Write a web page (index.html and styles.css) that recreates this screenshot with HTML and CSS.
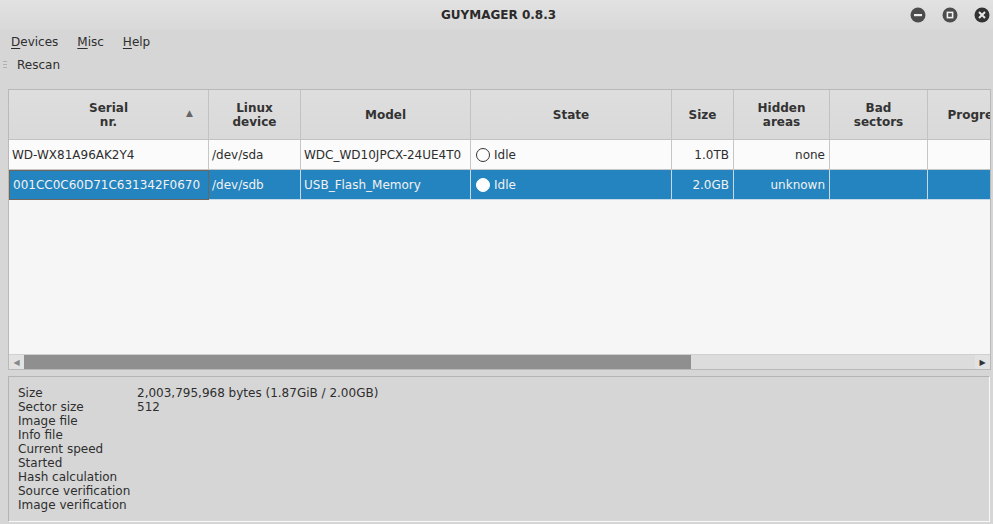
FILE: index.html
```html
<!DOCTYPE html>
<html>
<head>
<meta charset="utf-8">
<title>GUYMAGER 0.8.3</title>
<link rel="stylesheet" href="styles.css">
</head>
<body>
<div class="window">
  <div class="titlebar">
    <div class="title">GUYMAGER 0.8.3</div>
    <div class="wbtns">
      <span class="wbtn"><svg width="16" height="16" viewBox="0 0 16 16"><circle cx="8" cy="8" r="7.5" fill="#4d4d4d"/><rect x="4" y="7" width="8" height="2.2" fill="#f0f0f0"/></svg></span>
      <span class="wbtn"><svg width="16" height="16" viewBox="0 0 16 16"><circle cx="8" cy="8" r="7.5" fill="#4d4d4d"/><rect x="4.6" y="4.6" width="6.8" height="6.8" fill="#f0f0f0"/><rect x="6.2" y="6.2" width="3.6" height="3.6" fill="#4d4d4d"/></svg></span>
      <span class="wbtn"><svg width="16" height="16" viewBox="0 0 16 16"><circle cx="8" cy="8" r="7.5" fill="#333"/><path d="M5 5 L11 11 M11 5 L5 11" stroke="#e8e8e8" stroke-width="2"/></svg></span>
    </div>
  </div>
  <div class="menubar">
    <span class="menu"><u>D</u>evices</span>
    <span class="menu"><u>M</u>isc</span>
    <span class="menu"><u>H</u>elp</span>
  </div>
  <div class="toolbar">
    <span class="grip"></span>
    <span class="tool">Rescan</span>
  </div>
  <div class="tableframe">
    <div class="tableview">
      <div class="row header">
        <div class="cell hc sortcol">Serial<br>nr.<span class="sort">▲</span></div>
        <div class="cell hc">Linux<br>device</div>
        <div class="cell hc">Model</div>
        <div class="cell hc">State</div>
        <div class="cell hc">Size</div>
        <div class="cell hc">Hidden<br>areas</div>
        <div class="cell hc">Bad<br>sectors</div>
        <div class="cell hc">Progress</div>
      </div>
      <div class="row data">
        <div class="cell">WD-WX81A96AK2Y4</div>
        <div class="cell">/dev/sda</div>
        <div class="cell">WDC_WD10JPCX-24UE4T0</div>
        <div class="cell state"><span class="dot"></span>Idle</div>
        <div class="cell right">1.0TB</div>
        <div class="cell right">none</div>
        <div class="cell"></div>
        <div class="cell"></div>
      </div>
      <div class="row data selected">
        <div class="cell focus">001CC0C60D71C631342F0670</div>
        <div class="cell">/dev/sdb</div>
        <div class="cell">USB_Flash_Memory</div>
        <div class="cell state"><span class="dot filled"></span>Idle</div>
        <div class="cell right">2.0GB</div>
        <div class="cell right">unknown</div>
        <div class="cell"></div>
        <div class="cell"></div>
      </div>
      <div class="empty"></div>
      <div class="hscroll">
        <span class="sbtn left">◀</span>
        <span class="handle"></span>
        <span class="track"></span>
        <span class="sbtn rightbtn">▶</span>
      </div>
    </div>
  </div>
  <div class="info">
    <div class="irow"><span class="lab">Size</span><span>2,003,795,968 bytes (1.87GiB / 2.00GB)</span></div>
    <div class="irow"><span class="lab">Sector size</span><span>512</span></div>
    <div class="irow"><span class="lab">Image file</span><span></span></div>
    <div class="irow"><span class="lab">Info file</span><span></span></div>
    <div class="irow"><span class="lab">Current speed</span><span></span></div>
    <div class="irow"><span class="lab">Started</span><span></span></div>
    <div class="irow"><span class="lab">Hash calculation</span><span></span></div>
    <div class="irow"><span class="lab">Source verification</span><span></span></div>
    <div class="irow"><span class="lab">Image verification</span><span></span></div>
  </div>
</div>
</body>
</html>
```

FILE: styles.css
```css
* { box-sizing: border-box; }
html, body { margin: 0; padding: 0; }
body {
  width: 993px;
  height: 524px;
  overflow: hidden;
  background: #d6d6d6;
  font-family: "DejaVu Sans", sans-serif;
  font-size: 12px;
  color: #2e2e2e;
}
.window { display: flex; flex-direction: column; height: 524px; }

.titlebar {
  height: 30px;
  background: linear-gradient(#e2e2e2, #d8d8d8);
  display: flex;
  align-items: center;
  justify-content: center;
  position: relative;
}
.title {
  font-weight: bold;
  font-size: 12px;
  color: #2b2b2b;
  margin-top: -1px;
  margin-left: 4px;
}
.wbtns {
  position: absolute;
  right: 3px;
  top: 7px;
  display: flex;
  gap: 16px;
}
.wbtn { width: 16px; height: 16px; display: block; }
.wbtn svg { display: block; }

.menubar {
  height: 22px;
  display: flex;
  align-items: center;
  padding-left: 11px;
  gap: 19px;
  padding-top: 1px;
}
.menu { color: #2e2e2e; }
.menu u { text-decoration-thickness: 1px; text-underline-offset: 2px; }

.toolbar {
  height: 24px;
  display: flex;
  align-items: center;
  padding-left: 3px;
  padding-top: 2px;
}
.grip {
  width: 4px;
  height: 8px;
  background: repeating-linear-gradient(#b0b0b0 0 1px, transparent 1px 3px);
  margin-right: 10px;
}
.tool { color: #2e2e2e; }

.tableframe {
  margin-top: 13px;
  margin-left: 8px;
  width: 983px;
  height: 281px;
  border: 1px solid #b9b9b9;
  background: #f6f6f6;
  overflow: hidden;
}
.tableview { display: flex; flex-direction: column; height: 100%; }
.row {
  display: grid;
  grid-template-columns: 200px 92px 170px 201px 62px 96px 98px 100px;
  width: 1019px;
}
.cell {
  border-right: 1px solid #c6c6c6;
  border-bottom: 1px solid #c6c6c6;
  padding: 0 3px;
  display: flex;
  align-items: center;
  white-space: nowrap;
  overflow: hidden;
}
.header { height: 50px; background: linear-gradient(#dedede, #d9d9d9); }
.hc {
  justify-content: center;
  text-align: center;
  font-weight: bold;
  color: #333;
  line-height: 14px;
  border-right-color: #c2c2c2;
  border-bottom-color: #c2c2c2;
}
.sortcol { position: relative; }
.sort {
  position: absolute;
  right: 15px;
  top: 16px;
  font-size: 9px;
  color: #666;
  font-weight: normal;
}
.data { height: 30px; background: #fbfbfb; }
.right { justify-content: flex-end; padding-right: 4px; }
.state { padding-left: 5px; }
.dot {
  width: 14px;
  height: 14px;
  border-radius: 50%;
  border: 1px solid #333;
  background: #fff;
  margin-right: 4px;
}
.dot.filled { border-color: #fff; background: #fff; }
.selected { background: #2484bf; color: #f2f2f2; }
.selected .cell { border-right-color: #c8d8e4; border-bottom-color: #c8d8e4; }
.selected .focus { border: 1px solid #6e665e; }
.empty { flex: 1; background: #f6f6f6; }
.hscroll {
  height: 15px;
  display: flex;
  background: #dcdcdc;
  border-top: 1px solid #d0d0d0;
}
.sbtn {
  width: 15px;
  font-size: 8px;
  display: flex;
  align-items: center;
  justify-content: center;
  color: #888;
  background: #e2e2e2;
}
.rightbtn { color: #333; }
.handle { width: 667px; background: #8f8f8f; }
.track { flex: 1; background: #dcdcdc; }

.info {
  margin-top: 6px;
  margin-left: 8px;
  width: 982px;
  height: 146px;
  border-top: 1px solid #b4b4b4;
  border-left: 1px solid #b4b4b4;
  border-right: 1px solid #f8f8f8;
  border-bottom: 1px solid #f8f8f8;
  padding: 9px 0 0 9px;
}
.irow { display: flex; height: 14px; line-height: 14px; }
.lab { width: 119px; }
```
